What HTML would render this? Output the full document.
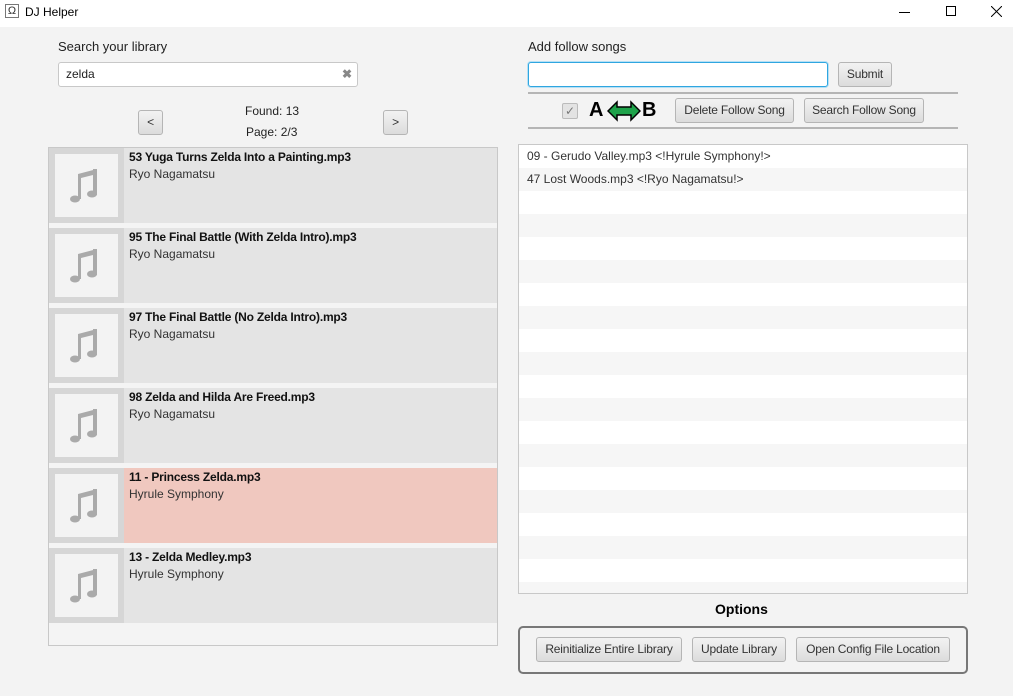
<!DOCTYPE html>
<html><head><meta charset="utf-8"><style>
*{box-sizing:border-box;margin:0;padding:0}
body{width:1013px;height:696px;background:#f3f3f3;font-family:"Liberation Sans",sans-serif;font-size:12px;color:#222;position:relative;overflow:hidden}
.abs{position:absolute}
.tb{left:0;top:0;width:1013px;height:27px;background:#fff}
.btn{position:absolute;border:1px solid #b5b5b5;border-radius:3px;background:linear-gradient(#f2f2f2,#dcdcdc);font-size:12px;color:#333;text-align:center;line-height:22px;height:24px;letter-spacing:-0.2px}
.row{position:absolute;left:49px;width:448px;height:75px;background:#e4e4e4}
.row .th{position:absolute;left:0;top:0;width:75px;height:75px;background:#d6d6d6}
.row .in{position:absolute;left:6px;top:6px;width:63px;height:63px;background:#f3f3f3}
.row .t{position:absolute;left:80px;top:2px;font-weight:bold;color:#111;letter-spacing:-0.2px}
.row .a{position:absolute;left:80px;top:19px;color:#333}
.lr{position:absolute;left:1px;width:448px;height:23px;padding-left:8px;line-height:23px;color:#333}
</style></head><body>
<div class="abs tb"></div>
<div class="abs" style="left:5px;top:4px;width:14px;height:14px;border:1px solid #777;font-size:11px;line-height:12px;text-align:center;color:#333">Ω</div>
<div class="abs" style="left:25px;top:5px;font-size:12px;color:#000">DJ Helper</div>
<div class="abs" style="left:899px;top:12px;width:11px;height:1px;background:#000"></div>
<div class="abs" style="left:946px;top:6px;width:10px;height:10px;border:1px solid #000"></div>
<svg class="abs" style="left:991px;top:6px" width="11" height="11"><path d="M0 0L11 11M11 0L0 11" stroke="#000" stroke-width="1"/></svg>

<div class="abs" style="left:58px;top:39px;font-size:13px;color:#222">Search your library</div>
<div class="abs" style="left:58px;top:62px;width:300px;height:25px;background:#fff;border:1px solid #c8c8c8;border-radius:3px;padding-left:7px;line-height:23px;font-size:12px">zelda<span style="position:absolute;right:5px;top:0;color:#888;font-weight:bold">✖</span></div>
<div class="btn" style="left:138px;top:110px;width:25px;height:25px">&lt;</div>
<div class="btn" style="left:383px;top:110px;width:25px;height:25px">&gt;</div>
<div class="abs" style="left:245px;top:104px">Found: 13</div>
<div class="abs" style="left:246px;top:125px">Page: 2/3</div>

<div class="abs" style="left:48px;top:147px;width:450px;height:499px;border:1px solid #c8c8c8;background:#f4f4f4"></div>
<svg width="0" height="0" style="position:absolute"><defs><g id="note" fill="#aaa"><path d="M23 20 L42 15 L42 20 L26 24 L26 45 L23 45 Z"/><rect x="38" y="15" width="4" height="26"/><ellipse cx="20" cy="45" rx="5" ry="3.5"/><ellipse cx="37" cy="40" rx="5" ry="3.5"/></g></defs></svg>
<div class="row" style="top:148px"><div class="th"><div class="in"><svg width="63" height="63"><use href="#note"/></svg></div></div><div class="t">53 Yuga Turns Zelda Into a Painting.mp3</div><div class="a">Ryo Nagamatsu</div></div>
<div class="row" style="top:228px"><div class="th"><div class="in"><svg width="63" height="63"><use href="#note"/></svg></div></div><div class="t">95 The Final Battle (With Zelda Intro).mp3</div><div class="a">Ryo Nagamatsu</div></div>
<div class="row" style="top:308px"><div class="th"><div class="in"><svg width="63" height="63"><use href="#note"/></svg></div></div><div class="t">97 The Final Battle (No Zelda Intro).mp3</div><div class="a">Ryo Nagamatsu</div></div>
<div class="row" style="top:388px"><div class="th"><div class="in"><svg width="63" height="63"><use href="#note"/></svg></div></div><div class="t">98 Zelda and Hilda Are Freed.mp3</div><div class="a">Ryo Nagamatsu</div></div>
<div class="row" style="top:468px;background:#f0c8bf"><div class="th"><div class="in"><svg width="63" height="63"><use href="#note"/></svg></div></div><div class="t">11 - Princess Zelda.mp3</div><div class="a">Hyrule Symphony</div></div>
<div class="row" style="top:548px"><div class="th"><div class="in"><svg width="63" height="63"><use href="#note"/></svg></div></div><div class="t">13 - Zelda Medley.mp3</div><div class="a">Hyrule Symphony</div></div>

<div class="abs" style="left:528px;top:39px;font-size:13px;color:#222">Add follow songs</div>
<div class="abs" style="left:528px;top:62px;width:300px;height:25px;background:#fff;border:1px solid #2fa6e0;border-radius:3px;box-shadow:0 0 0 1px #b6e0f5"></div>
<div class="btn" style="left:838px;top:62px;width:54px;height:25px">Submit</div>
<div class="abs" style="left:528px;top:92px;width:430px;height:2px;background:#b5b5b5"></div>
<div class="abs" style="left:528px;top:127px;width:430px;height:2px;background:#b5b5b5"></div>
<div class="abs" style="left:562px;top:103px;width:16px;height:16px;border:1px solid #bbb;border-radius:2px;background:#e3e3e3;color:#777;font-size:12px;line-height:14px;text-align:center">✓</div>
<div class="abs" style="left:589px;top:99px;font-size:20px;font-weight:bold;color:#000">A</div>
<svg class="abs" style="left:607px;top:100px" width="34" height="22" viewBox="0 0 34 22"><path d="M1 11 L10 2 L10 7 L24 7 L24 2 L33 11 L24 20 L24 15 L10 15 L10 20 Z" fill="#1ea24a" stroke="#000" stroke-width="1.5"/></svg>
<div class="abs" style="left:642px;top:99px;font-size:20px;font-weight:bold;color:#000">B</div>
<div class="btn" style="left:675px;top:98px;width:119px;height:25px">Delete Follow Song</div>
<div class="btn" style="left:804px;top:98px;width:120px;height:25px">Search Follow Song</div>

<div class="abs" style="left:518px;top:144px;width:450px;height:450px;border:1px solid #c8c8c8;background:#fff;overflow:hidden">
<div class="lr" style="top:0;left:0">09 - Gerudo Valley.mp3 &lt;!Hyrule Symphony!&gt;</div>
<div class="lr" style="top:23px;left:0;background:#f6f6f6">47 Lost Woods.mp3 &lt;!Ryo Nagamatsu!&gt;</div>
<div class="lr" style="top:69px;left:0;background:#f6f6f6"></div>
<div class="lr" style="top:115px;left:0;background:#f6f6f6"></div>
<div class="lr" style="top:161px;left:0;background:#f6f6f6"></div>
<div class="lr" style="top:207px;left:0;background:#f6f6f6"></div>
<div class="lr" style="top:253px;left:0;background:#f6f6f6"></div>
<div class="lr" style="top:299px;left:0;background:#f6f6f6"></div>
<div class="lr" style="top:345px;left:0;background:#f6f6f6"></div>
<div class="lr" style="top:391px;left:0;background:#f6f6f6"></div>
<div class="lr" style="top:437px;left:0;background:#f6f6f6"></div>
</div>

<div class="abs" style="left:715px;top:601px;font-size:14px;font-weight:bold;color:#000">Options</div>
<div class="abs" style="left:518px;top:626px;width:450px;height:48px;border:2px solid #777;border-radius:5px"></div>
<div class="btn" style="left:536px;top:637px;width:146px;height:25px">Reinitialize Entire Library</div>
<div class="btn" style="left:692px;top:637px;width:94px;height:25px">Update Library</div>
<div class="btn" style="left:796px;top:637px;width:154px;height:25px">Open Config File Location</div>
</body></html>
